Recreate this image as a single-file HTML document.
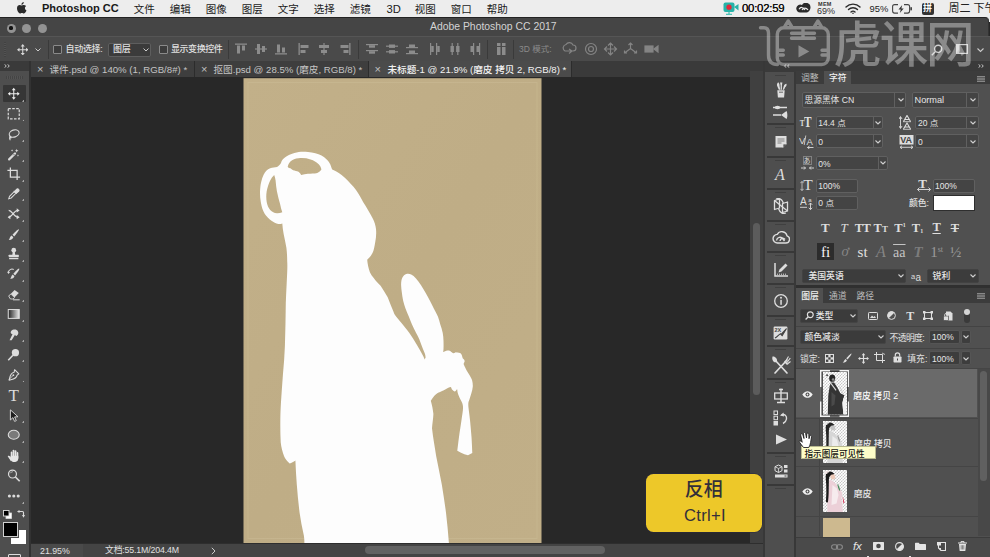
<!DOCTYPE html>
<html lang="zh"><head><meta charset="utf-8"><title>Photoshop CC</title>
<style>
*{box-sizing:border-box;margin:0;padding:0}
html,body{width:990px;height:557px;overflow:hidden;background:#282828}
body{position:relative;font-family:"Liberation Sans","Noto Sans CJK SC",sans-serif;font-size:10px;color:#d6d6d6;line-height:1}
.a{position:absolute}
.t{position:absolute;white-space:nowrap}
/* menu bar */
#menubar{left:0;top:0;width:990px;height:22px;background:#ededed;color:#1a1a1a;font-size:10.500px}
#menubar .t{top:4px}
/* title bar */
#titlebar{left:0;top:17px;width:988.500px;height:19px;background:#454545;border-top:1px solid #232323;border-right:1px solid #333;border-radius:0 4px 0 0}
.tl{position:absolute;top:5.500px;width:9px;height:9px;border-radius:50%;background:#939393}
/* options bar */
#optbar{left:0;top:36px;width:990px;height:25px;background:#4a4a4a;border-top:1px solid #555}
/* tab bar */
#tabbar{left:0;top:61px;width:764px;height:16px;background:#3a3a3a}
.tab{position:absolute;top:0;height:16px;font-size:9.650px;color:#c4c4c4;border-right:1px solid #2c2c2c}
.tab .t{top:4px}
/* left tools */
#tools{left:0;top:61px;width:31px;height:496px;background:#4e4e4e;border-right:2.500px solid #323232}
/* canvas */
#canvas{left:31px;top:77px;width:719px;height:466px;background:#282828}
#statusbar{left:31px;top:543px;width:733px;height:14px;background:#444}
#vscroll{left:750px;top:71px;width:13px;height:472px;background:#404040}
/* right */
#iconstrip{left:763px;top:61px;width:33px;height:496px;background:#4e4e4e;border-left:2px solid #383838;border-right:2px solid #383838}
#rpanel{left:796px;top:61px;width:194px;height:496px;background:#505050}
.inp{position:absolute;height:14px;background:#3a3a3a;border:1px solid #616161;border-radius:2px;color:#dcdcdc;font-size:9.5px}
.inp .t{top:2px;left:4px}
#rpanel .t{margin-top:1.200px}
</style></head>
<body>
<div id="menubar" class="a">
<svg class="a" style="left:16.800px;top:2px" width="9.800" height="11.800" viewBox="0 0 22 26"><path fill="#2a2a2a" d="M15.2 0c.2 1.6-.5 3.100-1.400 4.200-1 1.100-2.500 2-4 1.900-.2-1.500.6-3.100 1.500-4.100C12.300.9 13.900.1 15.200 0zM20.500 8.800c-1.700 1-2.700 2.700-2.700 4.700 0 2.300 1.400 4.300 3.500 5.100-.4 1.300-1 2.500-1.800 3.600-1.100 1.600-2.300 3.200-4.100 3.200s-2.300-1-4.300-1c-2 0-2.700 1.100-4.300 1.100-1.700 0-3-1.700-4.100-3.300C1.200 20 0 16.900 0 13.900 0 9.200 3.100 6.700 6.100 6.700c1.600 0 3 1.100 4 1.100s2.600-1.200 4.500-1.200c1.500 0 3.800.6 5.900 2.200z"/></svg>
<span class="t" style="left:42px;top:3px;font-weight:bold;font-size:11.050px">Photoshop CC</span>
<span class="t" style="left:133.8px">文件</span><span class="t" style="left:169.8px">编辑</span><span class="t" style="left:205.8px">图像</span><span class="t" style="left:241.8px">图层</span><span class="t" style="left:277.8px">文字</span><span class="t" style="left:313.8px">选择</span><span class="t" style="left:349.8px">滤镜</span><span class="t" style="left:386.500px;top:3.500px;font-size:11.200px">3D</span><span class="t" style="left:414.8px">视图</span><span class="t" style="left:450.8px">窗口</span><span class="t" style="left:486.8px">帮助</span>
<svg class="a" style="left:723px;top:2px" width="16" height="13" viewBox="0 0 16 13"><rect x="0.500" y="0.500" width="11" height="9.500" rx="2" fill="#27b3a8"/><path d="M11 5l4.500-3v6.500z" fill="#27b3a8"/><circle cx="6" cy="5.200" r="2.600" fill="#e5273a"/><path d="M6 10v2M3 12.300h6" stroke="#27b3a8" stroke-width="1"/></svg>
<span class="t" style="left:742px;top:3px;font-size:11.400px;color:#111;letter-spacing:-0.250px;text-shadow:0 0 0.400px #111">00:02:59</span>
<svg class="a" style="left:795px;top:3px" width="17" height="11" viewBox="0 0 17 11"><path d="M5.500 9.500a4 4 0 1 1 1.500-7.600 4.600 4.600 0 0 1 8.500 2.300c0 3-2 5.300-5 5.300z" fill="#2a2a2a"/><path d="M4 6.200c1.500-2.500 4-2.500 6 0.800M7 7c1.500-2.500 4.500-2.500 6 0" stroke="#ededed" stroke-width="1.100" fill="none"/></svg>
<span class="t" style="left:818px;top:1.500px;font-size:5.500px;font-weight:bold;color:#333;letter-spacing:0.300px">MEM</span>
<span class="t" style="left:817px;top:7px;font-size:9px;color:#333">69%</span>
<svg class="a" style="left:845px;top:3px" width="16" height="11" viewBox="0 0 16 11"><g fill="none" stroke="#2a2a2a" stroke-width="1.400" stroke-linecap="round"><path d="M1 4a10 10 0 0 1 14 0"/><path d="M3.500 6.500a6.500 6.500 0 0 1 9 0"/><path d="M6 9a3 3 0 0 1 4 0"/></g><circle cx="8" cy="10.200" r="0.800" fill="#2a2a2a"/></svg>
<span class="t" style="left:869.500px;top:4px;font-size:9.400px;color:#222">95%</span>
<svg class="a" style="left:892px;top:4px" width="21" height="10" viewBox="0 0 21 10"><rect x="0.600" y="0.600" width="17" height="8.500" rx="2" fill="none" stroke="#444" stroke-width="1.100"/><rect x="18.300" y="3" width="1.700" height="3.600" rx="0.800" fill="#444"/><rect x="6" y="0" width="6" height="10" fill="#ededed"/><path d="M10.200 1L6.500 5.400h2.300L7.800 9l3.900-4.500H9.400z" fill="#333"/></svg>
<span class="a" style="left:921.500px;top:2.500px;width:12px;height:12px;background:#333;border-radius:2px"></span><span class="t" style="left:923px;top:4px;font-size:9px;color:#fff;font-weight:bold">拼</span>
<span class="t" style="left:948.500px;top:3px;font-size:11px;color:#222">周二 下午</span>
</div>
<div id="titlebar" class="a">
<span class="tl" style="left:6.500px"></span><span class="a" style="left:9.400px;top:8.400px;width:3.200px;height:3.200px;border-radius:50%;background:#111"></span><span class="tl" style="left:22px"></span><span class="tl" style="left:37.500px"></span>
<span class="t" style="left:430px;top:4px;font-size:10.400px;color:#d4d4d4">Adobe Photoshop CC 2017</span>
</div>
<div id="optbar" class="a">
<span class="a" style="left:4px;top:5px;width:2px;height:15px;background:repeating-linear-gradient(#424242 0 1px,#525252 1px 2px)"></span>
<svg class="a" style="left:16.800px;top:6.800px" width="11.500" height="11.500" viewBox="0 0 13 13"><path d="M6.500 0L4.200 2.800h1.700v3.100H2.800V4.200L0 6.500l2.800 2.300V7.100h3.100v3.100H4.200L6.500 13l2.300-2.800H7.100V7.100h3.100v1.700L13 6.500l-2.800-2.300v1.700H7.100V2.800h1.700z" fill="#d8d8d8"/></svg>
<svg class="a" style="left:35px;top:11px" width="6" height="4" viewBox="0 0 6 4"><path d="M0.500 0.500L3 3l2.500-2.500" stroke="#ccc" stroke-width="1" fill="none"/></svg>
<span class="a" style="left:47.500px;top:3px;width:1px;height:19px;background:#3a3a3a"></span>
<span class="a" style="left:52.500px;top:8px;width:9px;height:9px;border:1px solid #8a8a8a;background:#3c3c3c;border-radius:1px"></span>
<span class="t" style="left:65.500px;top:7.500px;font-size:9px;color:#e0e0e0;font-weight:500;letter-spacing:-0.300px">自动选择:</span>
<span class="a" style="left:108px;top:5.500px;width:42.500px;height:14.500px;border:1px solid #5e5e5e;background:#3b3b3b;border-radius:2px"></span>
<span class="t" style="left:113px;top:7.500px;font-size:9px;color:#e0e0e0;font-weight:500;letter-spacing:-0.300px">图层</span>
<svg class="a" style="left:142.500px;top:10.500px" width="6" height="4" viewBox="0 0 6 4"><path d="M0.500 0.500L3 3l2.500-2.500" stroke="#ccc" stroke-width="1" fill="none"/></svg>
<span class="a" style="left:158.500px;top:8px;width:9px;height:9px;border:1px solid #8a8a8a;background:#3c3c3c;border-radius:1px"></span>
<span class="t" style="left:171px;top:7.500px;font-size:9px;color:#e0e0e0;font-weight:500;letter-spacing:-0.450px">显示变换控件</span>
<span class="a" style="left:228px;top:3px;width:1px;height:19px;background:#3a3a3a"></span>
<svg class="a" style="left:234.5px;top:6px" width="12" height="12" viewBox="0 0 12 12" fill="#8c8c8c"><rect x="0" y="0.500" width="12" height="1.300"/><rect x="2" y="2.500" width="3" height="8"/><rect x="7" y="2.500" width="3" height="5"/></svg><svg class="a" style="left:254.5px;top:6px" width="12" height="12" viewBox="0 0 12 12" fill="#8c8c8c"><rect x="0" y="5.400" width="12" height="1.200"/><rect x="2" y="1" width="3" height="10"/><rect x="7" y="3" width="3" height="6"/></svg><svg class="a" style="left:274.5px;top:6px" width="12" height="12" viewBox="0 0 12 12" fill="#8c8c8c"><rect x="0" y="10.200" width="12" height="1.300"/><rect x="2" y="1.500" width="3" height="8"/><rect x="7" y="4.500" width="3" height="5"/></svg><svg class="a" style="left:297.5px;top:6px" width="12" height="12" viewBox="0 0 12 12" fill="#8c8c8c"><rect x="0.500" y="0" width="1.300" height="12"/><rect x="2.500" y="2" width="8" height="3"/><rect x="2.500" y="7" width="5" height="3"/></svg><svg class="a" style="left:318px;top:6px" width="12" height="12" viewBox="0 0 12 12" fill="#8c8c8c"><rect x="5.400" y="0" width="1.200" height="12"/><rect x="1" y="2" width="10" height="3"/><rect x="3" y="7" width="6" height="3"/></svg><svg class="a" style="left:338.5px;top:6px" width="12" height="12" viewBox="0 0 12 12" fill="#8c8c8c"><rect x="10.200" y="0" width="1.300" height="12"/><rect x="1.500" y="2" width="8" height="3"/><rect x="4.500" y="7" width="5" height="3"/></svg><svg class="a" style="left:366px;top:6px" width="12" height="12" viewBox="0 0 12 12" fill="#8c8c8c"><rect x="0" y="1" width="12" height="1.200"/><rect x="3" y="2.200" width="6" height="2.500"/><rect x="0" y="7" width="12" height="1.200"/><rect x="3" y="8.200" width="6" height="2.500"/></svg><svg class="a" style="left:386px;top:6px" width="12" height="12" viewBox="0 0 12 12" fill="#8c8c8c"><rect x="0" y="2.600" width="12" height="1.200"/><rect x="3" y="1.500" width="6" height="3.400"/><rect x="0" y="8.200" width="12" height="1.200"/><rect x="3" y="7.100" width="6" height="3.400"/></svg><svg class="a" style="left:406px;top:6px" width="12" height="12" viewBox="0 0 12 12" fill="#8c8c8c"><rect x="0" y="4" width="12" height="1.200"/><rect x="3" y="1.500" width="6" height="2.500"/><rect x="0" y="10" width="12" height="1.200"/><rect x="3" y="7.500" width="6" height="2.500"/></svg><svg class="a" style="left:428.5px;top:6px" width="12" height="12" viewBox="0 0 12 12" fill="#8c8c8c"><rect x="1" y="0" width="1.200" height="12"/><rect x="2.200" y="3" width="2.500" height="6"/><rect x="7" y="0" width="1.200" height="12"/><rect x="8.200" y="3" width="2.500" height="6"/></svg><svg class="a" style="left:449px;top:6px" width="12" height="12" viewBox="0 0 12 12" fill="#8c8c8c"><rect x="2.600" y="0" width="1.200" height="12"/><rect x="1.500" y="3" width="3.400" height="6"/><rect x="8.200" y="0" width="1.200" height="12"/><rect x="7.100" y="3" width="3.400" height="6"/></svg><svg class="a" style="left:469px;top:6px" width="12" height="12" viewBox="0 0 12 12" fill="#8c8c8c"><rect x="4" y="0" width="1.200" height="12"/><rect x="1.500" y="3" width="2.500" height="6"/><rect x="10" y="0" width="1.200" height="12"/><rect x="7.500" y="3" width="2.500" height="6"/></svg>
<span class="a" style="left:357.500px;top:3px;width:1px;height:19px;background:#3a3a3a"></span>
<span class="a" style="left:487px;top:3px;width:1px;height:19px;background:#3a3a3a"></span>
<svg class="a" style="left:497px;top:6px" width="9" height="12" viewBox="0 0 9 12" fill="#8c8c8c"><rect x="0" y="0" width="3.500" height="3"/><rect x="5" y="0" width="3.500" height="3"/><rect x="0" y="4" width="3.500" height="8"/><rect x="5" y="4" width="3.500" height="8"/></svg>
<span class="a" style="left:512.500px;top:3px;width:1px;height:19px;background:#3a3a3a"></span>
<span class="t" style="left:519px;top:8px;font-size:8.500px;color:#8a8a8a">3D 模式:</span>
<svg class="a" style="left:562px;top:5px" width="98" height="14" viewBox="0 0 98 14" fill="none" stroke="#848484" stroke-width="1.200"><path d="M3 9a3.500 3.500 0 0 1 1-6.500 4 4 0 0 1 7 .500 3 3 0 0 1 0 6zM7 11.500l3-2.500-3-2"/><circle cx="29" cy="7" r="5.500"/><circle cx="29" cy="7" r="2.500"/><path d="M48.500 1v12M42.500 7h12M46 3.500l2.500-2.500 2.500 2.500M46 10.500l2.500 2.500 2.500-2.500M45 4.500l-2.500 2.500 2.500 2.500M52 4.500l2.500 2.500-2.500 2.500"/><path d="M68.500 1v5.500M62.500 11l6-4.500 6 4.500M66.500 3l2-2 2 2M62.500 8.500v2.500h2.500M74.500 8.500v2.500h-2.500"/><rect x="83" y="4" width="8" height="6" fill="#848484"/><path d="M92 7l4-3v6z" fill="#848484"/></svg>
<svg class="a" style="left:931px;top:6.500px" width="12" height="12" viewBox="0 0 12 12" fill="none" stroke="#d0d0d0" stroke-width="1.400"><circle cx="7.200" cy="4.800" r="3.600"/><path d="M4.500 7.500L0.800 11.200"/></svg>
<svg class="a" style="left:956px;top:7px" width="12" height="10" viewBox="0 0 12 10"><rect x="0.600" y="0.600" width="10.800" height="8.800" fill="none" stroke="#d0d0d0" stroke-width="1.200"/><rect x="0.600" y="0.600" width="3" height="8.800" fill="#d0d0d0"/></svg>
<svg class="a" style="left:977px;top:10.500px" width="7" height="5" viewBox="0 0 7 5"><path d="M0.500 0.500L3.500 3.500l3-3" stroke="#ccc" stroke-width="1.100" fill="none"/></svg>
</div>
<div id="tabbar" class="a">
<div class="tab" style="left:31px;width:164px;background:#3e3e3e"><span class="t" style="left:6px;top:3px;font-size:11px;color:#c0c0c0">×</span><span class="t" style="left:18.500px">课件.psd @ 140% (1, RGB/8#) *</span></div>
<div class="tab" style="left:195px;width:174px;background:#3e3e3e"><span class="t" style="left:6px;top:3px;font-size:11px;color:#c0c0c0">×</span><span class="t" style="left:18.500px">抠图.psd @ 28.5% (磨皮, RGB/8) *</span></div>
<div class="tab" style="left:369px;width:203px;background:#4b4b4b;color:#f2f2f2"><span class="t" style="left:5.500px;top:3px;font-size:11px;color:#c0c0c0">×</span><span class="t" style="left:18.500px;font-weight:500">未标题-1 @ 21.9% (磨皮 拷贝 2, RGB/8) *</span></div>
</div>
<div id="tools" class="a">
<span class="a" style="left:0;top:0;width:29px;height:10px;background:#3a3a3a"></span>
<svg class="a" style="left:3.5px;top:3.3px" width="6" height="4" viewBox="0 0 6 4"><path d="M0.500 0.300L2.300 2 0.500 3.700M3.500 0.300L5.300 2 3.500 3.700" fill="none" stroke="#d4d4d4" stroke-width="0.900"/></svg>
<span class="a" style="left:6px;top:14.500px;width:17px;height:3px;background:repeating-linear-gradient(90deg,#404040 0 1px,#565656 1px 2px);opacity:.7"></span>
<span class="a" style="left:3px;top:23.500px;width:23px;height:17.500px;background:#363636;border-radius:1px"></span>
<svg class="a" style="left:7.250px;top:26.45px" width="13.500" height="13.500" viewBox="0 0 16 16"><path d="M8 1L5.700 3.800h1.700v3.600H3.800V5.700L1 8l2.800 2.300V8.600h3.600v3.600H5.700L8 15l2.300-2.800H8.600V8.600h3.600v1.700L15 8l-2.800-2.300v1.700H8.600V3.800h1.700z" fill="#f0f0f0"/></svg><svg class="a" style="left:21.700px;top:38.10px" width="2.700" height="2.700" viewBox="0 0 3 3"><path d="M3 0v3H0z" fill="#c8c8c8"/></svg>
<svg class="a" style="left:7.250px;top:46.05px" width="13.500" height="13.500" viewBox="0 0 16 16"><rect x="1.500" y="2" width="13" height="12" fill="none" stroke="#dcdcdc" stroke-width="1.400" stroke-dasharray="3 1.700"/></svg><svg class="a" style="left:21.700px;top:57.70px" width="2.700" height="2.700" viewBox="0 0 3 3"><path d="M3 0v3H0z" fill="#c8c8c8"/></svg>
<svg class="a" style="left:7.250px;top:66.75px" width="13.500" height="13.500" viewBox="0 0 16 16"><g fill="none" stroke="#dcdcdc" stroke-width="1.300"><ellipse cx="8.500" cy="6.500" rx="6" ry="4.200" transform="rotate(-18 8.500 6.500)"/><path d="M4 9.500c-1.500 1-.5 2.500.5 2.200 1-.4.200-1.700-.8-1.200-1.200.8-.5 3 .3 4"/></g></svg><svg class="a" style="left:21.700px;top:78.40px" width="2.700" height="2.700" viewBox="0 0 3 3"><path d="M3 0v3H0z" fill="#c8c8c8"/></svg>
<svg class="a" style="left:7.250px;top:86.75px" width="13.500" height="13.500" viewBox="0 0 16 16"><path d="M2.500 13.500L9.500 6.500" stroke="#dcdcdc" stroke-width="2.600" stroke-linecap="round"/><path d="M7.400 8.600l1.500-1.500" stroke="#4c4c4c" stroke-width="1"/><g fill="#dcdcdc"><path d="M11.500 1l.6 1.600 1.600.6-1.600.6-.6 1.600-.6-1.600-1.600-.6 1.600-.6z"/><path d="M6 1.500l.4 1 1 .4-1 .4-.4 1-.4-1-1-.4 1-.4z"/><path d="M13 7.500l.4 1 1 .4-1 .4-.4 1-.4-1-1-.4 1-.4z"/></g></svg><svg class="a" style="left:21.700px;top:98.40px" width="2.700" height="2.700" viewBox="0 0 3 3"><path d="M3 0v3H0z" fill="#c8c8c8"/></svg>
<svg class="a" style="left:7.250px;top:106.25px" width="13.500" height="13.500" viewBox="0 0 16 16"><g fill="none" stroke="#dcdcdc" stroke-width="1.500"><path d="M4 0.500v11.500h11.500"/><path d="M0.500 4h11.500v11.500"/></g></svg><svg class="a" style="left:21.700px;top:117.90px" width="2.700" height="2.700" viewBox="0 0 3 3"><path d="M3 0v3H0z" fill="#c8c8c8"/></svg>
<svg class="a" style="left:7.250px;top:125.75px" width="13.500" height="13.500" viewBox="0 0 16 16"><path d="M2 14l1-3 5.500-5.500 2 2L5 13z" fill="none" stroke="#dcdcdc" stroke-width="1.200"/><path d="M8 4.500l3.500 3.500M9 5.500l2.500-3a1.800 1.800 0 0 1 2.500 2.500l-3 2.500z" fill="#dcdcdc" stroke="#dcdcdc" stroke-width="1.200"/></svg><svg class="a" style="left:21.700px;top:137.40px" width="2.700" height="2.700" viewBox="0 0 3 3"><path d="M3 0v3H0z" fill="#c8c8c8"/></svg>
<svg class="a" style="left:7.250px;top:146.25px" width="13.500" height="13.500" viewBox="0 0 16 16"><g fill="none" stroke="#dcdcdc" stroke-width="1.500"><path d="M2 4c4 0 6 8 11 8M2 12c4 0 6-8 11-8"/></g><path d="M11.500 1.500L15 4l-3.500 2.500zM11.500 9.500L15 12l-3.500 2.500zM4 9.500L0.800 12 4 14.500z" fill="#dcdcdc"/></svg><svg class="a" style="left:21.700px;top:157.90px" width="2.700" height="2.700" viewBox="0 0 3 3"><path d="M3 0v3H0z" fill="#c8c8c8"/></svg>
<svg class="a" style="left:7.250px;top:166.55px" width="13.500" height="13.500" viewBox="0 0 16 16"><path d="M14 1.500c.8.800-3.500 6.500-5.500 8.500l-2-2C8.500 6 13.200.7 14 1.500z" fill="#dcdcdc"/><path d="M5.500 9l2 2c-.5 2-2.500 3.500-5.500 3 1.500-1 1-3.500 3.500-5z" fill="#dcdcdc"/></svg><svg class="a" style="left:21.700px;top:178.20px" width="2.700" height="2.700" viewBox="0 0 3 3"><path d="M3 0v3H0z" fill="#c8c8c8"/></svg>
<svg class="a" style="left:7.250px;top:186.25px" width="13.500" height="13.500" viewBox="0 0 16 16"><circle cx="8" cy="3.800" r="2.800" fill="#dcdcdc"/><path d="M6.800 5.500h2.400l.5 4h-3.400z" fill="#dcdcdc"/><rect x="2" y="9.300" width="12" height="2.800" rx="0.500" fill="#dcdcdc"/><rect x="2.500" y="13" width="11" height="1.500" fill="#dcdcdc"/></svg><svg class="a" style="left:21.700px;top:197.90px" width="2.700" height="2.700" viewBox="0 0 3 3"><path d="M3 0v3H0z" fill="#c8c8c8"/></svg>
<svg class="a" style="left:7.250px;top:206.25px" width="13.500" height="13.500" viewBox="0 0 16 16"><path d="M14.500 2c.8.800-3 6-5 8l-2-2c2-2 6.200-6.800 7-6z" fill="#dcdcdc"/><path d="M6.800 9l2 2c-.5 2-2.300 3.300-5 2.800 1.300-1 1-3.300 3-4.800z" fill="#dcdcdc"/><path d="M1.500 6.500a4.500 4.500 0 0 1 6.500-3.500" fill="none" stroke="#dcdcdc" stroke-width="1.200"/><path d="M0 5.500l1.700 2.700 2-2.400z" fill="#dcdcdc"/></svg><svg class="a" style="left:21.700px;top:217.90px" width="2.700" height="2.700" viewBox="0 0 3 3"><path d="M3 0v3H0z" fill="#c8c8c8"/></svg>
<svg class="a" style="left:7.250px;top:226.75px" width="13.500" height="13.500" viewBox="0 0 16 16"><path d="M2 9.500l7-7 5 3.500-7 7H4z" fill="#dcdcdc"/><path d="M4.500 7l4.500 4.500" stroke="#4c4c4c" stroke-width="1"/><path d="M2 9.500L4.500 7l4.500 4.500L7 13H4z" fill="#4c4c4c" stroke="#dcdcdc" stroke-width="1"/><path d="M7 14h8" stroke="#dcdcdc" stroke-width="1.200"/></svg><svg class="a" style="left:21.700px;top:238.40px" width="2.700" height="2.700" viewBox="0 0 3 3"><path d="M3 0v3H0z" fill="#c8c8c8"/></svg>
<svg class="a" style="left:7.250px;top:246.25px" width="13.500" height="13.500" viewBox="0 0 16 16"><defs><linearGradient id="gt" x1="0" x2="1"><stop offset="0" stop-color="#222"/><stop offset="1" stop-color="#e8e8e8"/></linearGradient></defs><rect x="1.500" y="3" width="13" height="10.500" fill="url(#gt)" stroke="#dcdcdc" stroke-width="1.200"/></svg><svg class="a" style="left:21.700px;top:257.90px" width="2.700" height="2.700" viewBox="0 0 3 3"><path d="M3 0v3H0z" fill="#c8c8c8"/></svg>
<svg class="a" style="left:7.250px;top:266.75px" width="13.500" height="13.500" viewBox="0 0 16 16"><path d="M5 3.500c2-2 6.500-2.500 8 .5 1.200 2.500-.5 5-2.500 5.500l-1-1.500-4 6.500H3l3.500-7c-2-.5-2.800-2.500-1.500-4z" fill="#dcdcdc"/></svg><svg class="a" style="left:21.700px;top:278.40px" width="2.700" height="2.700" viewBox="0 0 3 3"><path d="M3 0v3H0z" fill="#c8c8c8"/></svg>
<svg class="a" style="left:7.250px;top:286.75px" width="13.500" height="13.500" viewBox="0 0 16 16"><circle cx="10" cy="5.500" r="4.300" fill="#dcdcdc"/><path d="M7 8.500l-5.500 6" stroke="#dcdcdc" stroke-width="1.800"/></svg><svg class="a" style="left:21.700px;top:298.40px" width="2.700" height="2.700" viewBox="0 0 3 3"><path d="M3 0v3H0z" fill="#c8c8c8"/></svg>
<svg class="a" style="left:7.250px;top:306.95px" width="13.500" height="13.500" viewBox="0 0 16 16"><path d="M9 2l5 5-2 1.500c-.5 3-2.500 4.500-7.500 5.500l-2 .5.500-2C4 7.500 5.500 5.500 8.500 5z" fill="none" stroke="#dcdcdc" stroke-width="1.300" stroke-linejoin="round"/><path d="M2.500 13.500l4.500-4.500" stroke="#dcdcdc" stroke-width="1"/><circle cx="7.500" cy="8.500" r="1.100" fill="#dcdcdc"/></svg><svg class="a" style="left:21.700px;top:318.60px" width="2.700" height="2.700" viewBox="0 0 3 3"><path d="M3 0v3H0z" fill="#c8c8c8"/></svg>
<span class="t" style="left:7px;top:325.0px;font-family:'Liberation Serif',serif;font-size:17px;margin-left:1.500px;margin-top:1px;color:#dcdcdc">T</span><svg class="a" style="left:7.250px;top:327.75px" width="13.500" height="13.500" viewBox="0 0 16 16"></svg><svg class="a" style="left:21.700px;top:339.40px" width="2.700" height="2.700" viewBox="0 0 3 3"><path d="M3 0v3H0z" fill="#c8c8c8"/></svg>
<svg class="a" style="left:7.250px;top:347.55px" width="13.500" height="13.500" viewBox="0 0 16 16"><path d="M4 1v12l3-2.800 2 4.500 2-.9-2-4.400 4-.2z" fill="#1e1e1e" stroke="#dcdcdc" stroke-width="1.100" stroke-linejoin="round"/></svg><svg class="a" style="left:21.700px;top:359.20px" width="2.700" height="2.700" viewBox="0 0 3 3"><path d="M3 0v3H0z" fill="#c8c8c8"/></svg>
<svg class="a" style="left:7.250px;top:367.45px" width="13.500" height="13.500" viewBox="0 0 16 16"><ellipse cx="8" cy="8" rx="6.500" ry="5.300" fill="#7a7a7a" stroke="#dcdcdc" stroke-width="1.300"/></svg><svg class="a" style="left:21.700px;top:379.10px" width="2.700" height="2.700" viewBox="0 0 3 3"><path d="M3 0v3H0z" fill="#c8c8c8"/></svg>
<svg class="a" style="left:7.250px;top:387.55px" width="13.500" height="13.500" viewBox="0 0 16 16"><g fill="#e6e6e6"><rect x="4.400" y="3" width="2.100" height="8" rx="1.050"/><rect x="6.700" y="0.800" width="2.100" height="9" rx="1.050"/><rect x="9" y="1.500" width="2.100" height="9" rx="1.050"/><rect x="11.300" y="3.600" width="2.100" height="8" rx="1.050"/><path d="M4.400 8h9v3c0 2.600-1.500 4.300-3.600 4.300H7.600c-1.500 0-2.600-1-3.200-2.200z"/><path d="M0.800 8.700c.8-.9 2.100-.7 2.900.1l2.200 2.400-1.200 3.200z"/></g></svg><svg class="a" style="left:21.700px;top:399.20px" width="2.700" height="2.700" viewBox="0 0 3 3"><path d="M3 0v3H0z" fill="#c8c8c8"/></svg>
<svg class="a" style="left:7.250px;top:407.75px" width="13.500" height="13.500" viewBox="0 0 16 16"><circle cx="6.500" cy="6" r="4.700" fill="none" stroke="#dcdcdc" stroke-width="1.400"/><path d="M10 9.500l5 5" stroke="#dcdcdc" stroke-width="2"/><path d="M4 5a3 3 0 0 1 3-1.800" stroke="#dcdcdc" stroke-width="0.800" fill="none"/></svg>
<svg class="a" style="left:7px;top:432.5px" width="14" height="4" viewBox="0 0 14 4" fill="#dcdcdc"><circle cx="2.400" cy="2" r="1.550"/><circle cx="6.800" cy="2" r="1.550"/><circle cx="11.200" cy="2" r="1.550"/></svg><svg class="a" style="left:21.700px;top:439.90px" width="2.700" height="2.700" viewBox="0 0 3 3"><path d="M3 0v3H0z" fill="#c8c8c8"/></svg>
<svg class="a" style="left:2.500px;top:448.5px" width="9" height="9" viewBox="0 0 9 9"><rect x="3" y="3" width="5.500" height="5.500" fill="#fff" stroke="#ddd" stroke-width="0.800"/><rect x="0.500" y="0.500" width="5.500" height="5.500" fill="#000" stroke="#ddd" stroke-width="0.900"/></svg>
<svg class="a" style="left:16.500px;top:448.5px" width="8" height="8" viewBox="0 0 8 8"><path d="M2 1.500h3.500a1 1 0 0 1 1 1v3.500" fill="none" stroke="#dcdcdc" stroke-width="1.100"/><path d="M2.500 0L0 1.500 2.500 3zM5 5l1.500 2.800L8 5z" fill="#dcdcdc"/></svg>
<span class="a" style="left:11px;top:469px;width:14.500px;height:14px;background:#fff"></span><span class="a" style="left:3px;top:461px;width:14.500px;height:14.500px;background:#000;border:1px solid #d0d0d0;box-shadow:0 0 0 1px #4c4c4c"></span>
<span class="a" style="left:7.500px;top:493px;width:13px;height:6px;border:1px solid #dcdcdc;border-radius:1px"></span>
</div>
<div id="canvas" class="a">
<svg class="a" style="left:212px;top:1px" width="299" height="465" viewBox="243 78 299 465">
<defs><linearGradient id="pg" x1="0" y1="0" x2="1" y2="1"><stop offset="0" stop-color="#c2b089"/><stop offset="0.5" stop-color="#bfad86"/><stop offset="1" stop-color="#c1af88"/></linearGradient></defs>
<rect x="243.5" y="78.2" width="298" height="464.800" fill="url(#pg)"/><rect x="248" y="82.500" width="289" height="456" fill="none" stroke="#d2c29e" stroke-opacity="0.350" stroke-width="1"/>
<path fill="#fdfdfd" fill-rule="evenodd" d="
M281,163 C282,159 286,155.5 294.4,153 C299,151.6 303,151.6 308,152 C313,152.5 318,153.5 321.5,155.6 C325.5,158 328,160.5 329.5,163 C331,165.5 331.5,168 332.2,169.6
C335,171 338.5,172.5 341.6,175 C346,178.5 350,183 353.7,187.1 C357,191 360.5,197 363.1,202 C366.5,207.5 370,213 372.5,218.1 C374.5,222 375.6,225.5 376,229
C376.5,234 376,238 375.2,242.3 C374.5,246.5 374,250 372.5,253.1 C371,256 369,258 367.2,259.8
C367.5,264 368.5,268 369.8,272 C371.5,276 376,281 380.6,285.8 C383,289.5 385.5,293.5 387.7,297.3 C389.5,302 391.5,307 393.5,311.7 C393.8,312.2 393.7,313.0 395.0,314.9 C396.3,316.8 399.4,320.3 401.5,323.0 C403.6,325.7 405.8,328.1 407.9,331.1 C410.0,334.1 412.5,337.8 414.4,340.8 C416.3,343.8 417.8,346.3 419.3,348.9 C420.8,351.5 422.4,354.4 423.3,356.2 C424.2,358.0 424.4,358.9 424.6,359.5
L425.6,357.5 C425.5,356.9 425.5,355.8 424.9,353.8 C424.2,351.8 422.6,348.1 421.7,345.7 C420.8,343.3 420.2,341.4 419.3,339.2 C418.4,337.0 417.2,335.1 416.0,332.7 C414.8,330.3 413.2,327.3 412.0,324.6 C410.8,321.9 409.9,319.2 408.8,316.5 C407.7,313.8 406.4,311.2 405.5,308.5 C404.6,305.8 403.7,303.1 403.1,300.4 C402.5,297.7 402.1,295.0 401.8,292.3 C401.5,289.6 401.0,286.6 401.1,284.2 C401.2,281.8 401.4,279.4 402.3,277.7 C403.2,276.0 404.8,274.6 406.3,274.1 C407.8,273.6 409.6,273.8 411.2,274.5 C412.8,275.2 414.4,276.8 416.0,278.5 C417.6,280.2 419.3,282.6 420.9,285.0 C422.5,287.4 424.2,290.5 425.7,293.1 C427.2,295.7 428.4,297.8 429.8,300.4 C431.2,303.0 432.5,305.8 433.8,308.5 C435.1,311.2 436.8,313.8 437.9,316.5 C439.0,319.2 439.5,321.9 440.3,324.6 C441.1,327.3 442.2,330.0 442.7,332.7 C443.2,335.4 443.4,338.1 443.5,340.8 C443.6,343.5 443.6,347.0 443.5,348.9 C443.4,350.8 443.2,351.6 443.2,352.1
C443.5,352.0 444.4,351.6 445.1,351.3 C445.8,351.1 446.6,350.6 447.5,350.6 C448.4,350.6 449.4,350.7 450.2,351.1 C451.0,351.5 451.7,352.5 452.3,352.8 C452.9,353.1 453.3,353.3 453.9,353.2 C454.5,353.1 455.2,352.3 455.8,352.2 C456.4,352.1 457.0,352.5 457.7,352.6 C458.4,352.7 459.4,352.7 460.0,353.0 C460.6,353.3 461.1,353.8 461.5,354.4 C461.9,355.0 462.0,355.9 462.2,356.5 C462.4,357.1 462.4,357.6 462.7,358.2 C463.0,358.8 463.9,359.3 464.2,359.8 C464.5,360.3 464.7,360.8 464.6,361.4 C464.5,362.0 463.9,362.7 463.8,363.3 C463.7,363.9 463.6,364.0 464.0,365.1 C464.4,366.2 465.6,368.5 466.5,370.2 C467.4,371.9 468.7,373.5 469.6,375.2 C470.5,376.9 471.6,378.3 472.1,380.2 C472.6,382.1 472.9,384.4 472.8,386.5 C472.7,388.6 472.0,390.7 471.5,392.8 C471.0,394.9 470.1,397.3 469.6,399.0 C469.1,400.7 468.6,401.2 468.4,402.8 C468.2,404.4 468.3,405.6 468.6,408.5 C468.9,411.4 469.5,415.2 470.0,420.0 C470.5,424.8 471.1,431.5 471.5,437.0 C471.9,442.5 472.2,450.3 472.3,453.0 L468,455.3 L464.4,454.2 L461,452.8 L457.3,450.7 C457.6,448.4 458.3,442.1 459.0,437.0 C459.7,431.9 460.8,424.8 461.5,420.0 C462.2,415.2 462.9,411.4 463.0,408.5 C463.1,405.6 462.7,404.6 462.1,402.8 C461.5,401.0 460.3,399.5 459.6,397.8 C458.9,396.1 458.1,394.2 457.7,392.8 C457.3,391.4 457.4,389.6 457.1,389.3 C456.8,389.0 456.2,390.4 455.8,390.8 C455.4,391.2 455.1,391.7 454.5,391.5 C453.9,391.3 452.7,390.3 452.0,389.6 C451.3,388.9 451.6,387.0 450.2,387.1 C448.8,387.2 446.2,389.2 443.9,390.3 C441.6,391.4 438.5,392.3 436.3,394.0 C434.1,395.7 431.7,399.6 430.8,400.7
C432,405 433,409.5 433.4,414 C433.2,419 432.3,423.5 432,428.2 C433,437.5 434.8,447 436.2,456.3 C438,465.5 440,475 441.8,484.5 C443.3,494 444.8,503.5 446,512.7 C447.2,523 448.2,533 448.9,543
L304.4,543 C304.4,540 304.2,537.5 303.8,535.2 C302,527.5 300.6,520 299.6,512.7 C298.4,503.5 297.5,494 296.8,484.5 C296.2,476.5 295.7,468.5 295.4,460.6 C293.5,462 291.5,463 289.7,463.4 C287,461.5 285.3,459 284.1,456.3 C282.5,452 281.2,447.5 280.7,442.3 C280,428 280.3,414 280.9,403.6 C281.5,394 282.2,384.5 282.9,375 C283.8,365.5 284.5,355.5 284.9,346 C285.4,331.5 285.6,317.5 285.8,303 C286.2,292 286.8,282 287.2,272 C287.4,268 287.4,264.5 287.2,261.2 C287.2,256.5 286.9,252 286.4,247.7 C285.5,243 284.6,238.5 283.7,234.3 C283,230.5 282.5,227 282.3,223.5
C281,224 279.7,224.2 278.3,224 C276,223.5 273.5,222.3 271.5,220.8 C268.8,218.8 266.5,216.5 264.8,214 C262.8,210.5 261.5,206.5 260.8,202 C260,197.5 259.8,193 260.2,188.5 C260.6,183.5 261.7,179 263.5,175 C265,171.8 267.3,169.5 270.2,168.3 C272.5,167.4 275,167.5 277,167 C278.6,166 280,164.6 281,163 Z
M287.7,166.9 C288,164.8 289,163 290.4,161.5 C292.5,159.6 295.4,158.6 298.5,158.3 C302.5,157.8 306.7,158.2 310.6,159.4 C313.7,160.4 316.6,162 318.7,164.2 C320.2,165.8 321.2,167.6 321.4,169.6 C320.5,171.2 319,172.3 317.3,172.9 C314.3,173.6 311,173.5 307.9,173.7 C305.6,174 303.4,174.6 301.2,175 C300.6,173.7 299.7,172.6 298.5,171.8 C296.8,170.9 294.9,170.7 293.1,170.2 C292.1,169.7 291.2,169.1 290.4,168.3 C289.4,168.1 288.5,167.6 287.7,166.9 Z
M274.2,175 C272.5,176.5 271.2,178.3 270.2,180.4 C268.6,183.8 267.4,187.4 266.7,191.2 C266.1,194.8 266.1,198.4 266.7,201.9 C267.3,205 268.4,207.8 270.2,210 C272,211.9 274.3,213 276.9,213.3 C278.8,213.4 280.6,213 282.3,212.2 C281.4,209.8 280.7,207.2 280.2,204.6 C279,200.2 277.8,195.8 276.9,191.2 C276.3,187.6 275.9,184 275.6,180.4 C275.3,178.5 274.8,176.7 274.2,175 Z
"/>
</svg>
</div>
<div id="vscroll" class="a"><span class="a" style="left:3px;top:152px;width:6.500px;height:171.500px;border-radius:3.500px;background:#5c5c5c"></span></div>
<div id="statusbar" class="a">
<span class="a" style="left:0;top:0;width:733px;height:1px;background:#2e2e2e"></span>
<span class="a" style="left:0;top:1px;width:52px;height:13px;background:#4a4a4a"></span>
<span class="t" style="left:9px;top:3.500px;font-size:8.800px;color:#e0e0e0">21.95%</span>
<span class="t" style="left:74px;top:3px;font-size:8.800px;color:#e0e0e0;letter-spacing:-0.150px">文档:55.1M/204.4M</span>
<svg class="a" style="left:180px;top:4px" width="5" height="8" viewBox="0 0 5 8"><path d="M0.800 0.800L4 4 0.800 7.200" fill="none" stroke="#ccc" stroke-width="1"/></svg>
<span class="a" style="left:334px;top:3px;width:240px;height:7.500px;border-radius:4px;background:#626262"></span>
</div>
<div id="iconstrip" class="a">
<span class="a" style="left:0;top:0;width:34px;height:10.500px;background:#3a3a3a"></span><svg class="a" style="left:19px;top:3px" width="6" height="4" viewBox="0 0 6 4"><path d="M2.300 0.300L0.500 2 2.300 3.700M5.300 0.300L3.500 2 5.300 3.700" fill="none" stroke="#d4d4d4" stroke-width="0.900"/></svg>
<span class="a" style="left:10px;top:14px;width:11px;height:1px;background:#404040"></span>
<svg class="a" style="left:7.5px;top:20.5px" width="16" height="16" viewBox="0 0 16 16"><path d="M4.300 8.300h7.400l-.6 7.200H4.900z" fill="#dedede"/><path d="M5.800 7.800L4.200 4c-.6-1.300 0-3 1-3.700 1 .9 1.600 2.400 1.300 3.700L7.300 7.800zM7.600 7.800V3.600L7.100.6h2.300L8.900 3.600v4.200zM9.700 7.800l1-3.600c.4-1.300 1.500-2.400 2.800-2.500.3 1.300-.2 2.700-1.200 3.400L11 7.800z" fill="#dedede"/><path d="M6 10.200h4" stroke="#4b4b4b" stroke-width="0.800"/></svg>
<svg class="a" style="left:6.5px;top:42.599999999999994px" width="18" height="16" viewBox="0 0 18 16"><path d="M1 3.500h3M7.500 3.500H15" stroke="#dedede" stroke-width="1.500"/><ellipse cx="5.500" cy="3.500" rx="2.800" ry="1.800" fill="#dedede"/><path d="M1 11h8" stroke="#dedede" stroke-width="1.500"/><path d="M9 11l5.500-4c1 1.200 1.200 6.500 0 8z" fill="#dedede"/></svg>
<span class="a" style="left:1.500px;top:62px;width:28px;height:2px;background:#383838"></span><span class="a" style="left:10px;top:66px;width:11px;height:1px;background:#404040"></span>
<svg class="a" style="left:8.5px;top:74.0px" width="14" height="14" viewBox="0 0 14 14"><path d="M1.500 1h11v8l-3.500 3.500h-7.500z" fill="#dedede"/><path d="M9 12.500V9h3.500" fill="#4c4c4c" stroke="#dedede" stroke-width="0.800"/><path d="M3.500 4h7M3.500 6h7M3.500 8h4" stroke="#6a6a6a" stroke-width="0.800"/></svg>
<span class="a" style="left:1.500px;top:94.5px;width:28px;height:2px;background:#383838"></span><span class="a" style="left:10px;top:98.5px;width:11px;height:1px;background:#404040"></span>
<span class="t" style="left:9px;top:104px;font-family:'Liberation Serif',serif;font-style:italic;font-size:16px;color:#dedede;margin-left:1px;margin-top:1.500px">A</span>
<span class="a" style="left:1.500px;top:126.5px;width:28px;height:2px;background:#383838"></span><span class="a" style="left:10px;top:130.5px;width:11px;height:1px;background:#404040"></span>
<svg class="a" style="left:7.5px;top:137.4px" width="16" height="16" viewBox="0 0 16 16"><g fill="none" stroke="#dedede" stroke-width="1.300" stroke-linejoin="round"><path d="M1.500 2.500l5-1.500v9l-5 1.500z"/><path d="M9.500 5.500l5-1.500v9l-5 1.500z"/><path d="M3 1c3-1 6 0 7.500 4.500M13 15c-3 1-6 0-7.500-4.500M1.500 2.500l13 10.500"/></g></svg>
<span class="a" style="left:1.500px;top:158.5px;width:28px;height:2px;background:#383838"></span><span class="a" style="left:10px;top:162.5px;width:11px;height:1px;background:#404040"></span>
<svg class="a" style="left:6.5px;top:169.5px" width="18" height="14" viewBox="0 0 18 14"><g fill="none" stroke="#dedede" stroke-width="1.400"><path d="M5.500 12a4.300 4.300 0 0 1-.3-8.600 5.300 5.300 0 0 1 9.800 1.400 3.700 3.700 0 0 1-1 7.200z"/><path d="M4.500 9.500c.5-3.500 4.500-4.500 6.500-1.500l1.500 2"/><path d="M8 10c.5-3 3.500-3.500 5-1.500"/></g></svg>
<span class="a" style="left:1.500px;top:190px;width:28px;height:2px;background:#383838"></span><span class="a" style="left:10px;top:194px;width:11px;height:1px;background:#404040"></span>
<svg class="a" style="left:7.5px;top:201.0px" width="16" height="16" viewBox="0 0 16 16"><path d="M2 1v13h13" fill="none" stroke="#dedede" stroke-width="1.500"/><path d="M4 12.200h9.500" stroke="#dedede" stroke-width="1" stroke-dasharray="1 1"/><path d="M5.500 10.500l1-3 6-6 2 2-6 6z" fill="#dedede"/></svg>
<span class="a" style="left:1.500px;top:221.5px;width:28px;height:2px;background:#383838"></span><span class="a" style="left:10px;top:225.5px;width:11px;height:1px;background:#404040"></span>
<svg class="a" style="left:7.5px;top:232.2px" width="16" height="16" viewBox="0 0 16 16"><circle cx="8" cy="8" r="6.300" fill="none" stroke="#dedede" stroke-width="1.300"/><rect x="7.300" y="6.800" width="1.500" height="5" fill="#dedede"/><circle cx="8" cy="4.700" r="1" fill="#dedede"/></svg>
<span class="a" style="left:1.500px;top:253.5px;width:28px;height:2px;background:#383838"></span><span class="a" style="left:10px;top:257.5px;width:11px;height:1px;background:#404040"></span>
<svg class="a" style="left:8.0px;top:265.0px" width="15" height="14" viewBox="0 0 15 14"><rect x="0.600" y="0.600" width="13.800" height="12.800" rx="1.200" fill="#dedede"/><text x="1.500" y="6" font-family="Liberation Sans,sans-serif" font-size="5.500" font-weight="bold" fill="#444">2X</text><path d="M2 12c3-1.500 4-4 6-4.500M13.500 2.500L8 8.500l1.200 1.200z" stroke="#444" stroke-width="1.100" fill="#444"/></svg>
<span class="a" style="left:1.500px;top:284.3px;width:28px;height:2px;background:#383838"></span><span class="a" style="left:10px;top:288.3px;width:11px;height:1px;background:#404040"></span>
<svg class="a" style="left:5.5px;top:293.8px" width="20" height="20" viewBox="0 0 20 20"><g stroke="#dedede" stroke-width="1.700" stroke-linecap="round"><path d="M4 5l12 13M16 5L4 18"/></g><path d="M1.500 1.500c2.500-.5 5 2 4.500 5L4 7.500C1.500 6.500.8 4 1.500 1.500z" fill="#dedede"/><path d="M14.500 6.500l3-5M16 7.500l3.300-4.500M17 8.500l2.500-2" stroke="#dedede" stroke-width="1.100"/><path d="M14 5.500l3.500 3.500-1.500 1-3-3z" fill="#dedede"/></svg>
<span class="a" style="left:1.500px;top:316.5px;width:28px;height:2px;background:#383838"></span><span class="a" style="left:10px;top:320.5px;width:11px;height:1px;background:#404040"></span>
<svg class="a" style="left:7.5px;top:327.2px" width="16" height="16" viewBox="0 0 16 16"><rect x="1.700" y="5" width="12.600" height="6" fill="none" stroke="#dedede" stroke-width="1.300"/><path d="M8 0.500v14.500M6 1.500h4M4 14.500h8" stroke="#dedede" stroke-width="1.400"/></svg>
<svg class="a" style="left:7.5px;top:348.7px" width="16" height="16" viewBox="0 0 16 16"><rect x="1" y="1" width="3.500" height="3.500" fill="none" stroke="#dedede" stroke-width="1"/><rect x="1" y="6.200" width="3.500" height="3.500" fill="none" stroke="#dedede" stroke-width="1"/><rect x="0.500" y="11" width="4.500" height="4.500" fill="#dedede"/><path d="M8.500 5c3-1.500 5.500 1 5 4-.3 2-1.500 3.500-3.500 4.500" fill="none" stroke="#dedede" stroke-width="1.400"/><path d="M7 5.500l3.500-3 .5 4z" fill="#dedede"/></svg>
<svg class="a" style="left:10.0px;top:372.7px" width="13" height="11" viewBox="0 0 13 11"><path d="M1 0.500l11 5-11 5z" fill="#dedede"/></svg>
<span class="a" style="left:1.500px;top:391.3px;width:28px;height:2px;background:#383838"></span><span class="a" style="left:10px;top:395.3px;width:11px;height:1px;background:#404040"></span>
<svg class="a" style="left:8.5px;top:402.8px" width="14" height="14" viewBox="0 0 14 14"><path d="M4.500 1L8 2.700v4L4.500 8.500 1 6.700v-4z" fill="none" stroke="#dedede" stroke-width="1"/><path d="M1 2.700l3.500 1.800L8 2.700M4.500 4.500v4" stroke="#dedede" stroke-width="0.800" fill="none"/><rect x="10" y="1" width="3.500" height="3" fill="#dedede"/><rect x="10" y="5.500" width="3.500" height="3" fill="#dedede"/><rect x="1" y="10.500" width="12.500" height="3" fill="#dedede"/><rect x="10.500" y="11.500" width="2" height="1" fill="#4c4c4c"/></svg>
<span class="a" style="left:1.500px;top:423.3px;width:28px;height:2px;background:#383838"></span><span class="a" style="left:10px;top:427.3px;width:11px;height:1px;background:#404040"></span>
</div>
<div id="rpanel" class="a">
<span class="a" style="left:0px;top:0px;width:194px;height:10px;background:#3a3a3a"></span>
<svg class="a" style="left:181.5px;top:3px" width="6" height="4" viewBox="0 0 6 4"><path d="M0.500 0.300L2.300 2 0.500 3.700M3.500 0.300L5.300 2 3.500 3.700" fill="none" stroke="#d4d4d4" stroke-width="0.900"/></svg>
<span class="a" style="left:0px;top:10px;width:194px;height:13px;background:#3c3c3c"></span>
<span class="a" style="left:28px;top:10px;width:27px;height:13px;background:#505050"></span>
<span class="t" style="left:5px;top:12px;font-size:8.8px;color:#bdbdbd;">调整</span>
<span class="t" style="left:33px;top:12px;font-size:8.8px;color:#f0f0f0;font-weight:500">字符</span>
<svg class="a" style="left:180.5px;top:14.5px" width="8" height="6" viewBox="0 0 8 6"><path d="M0 0.600h8M0 2.200h8M0 3.800h8M0 5.400h8" stroke="#9a9a9a" stroke-width="0.900"/></svg>
<span class="a" style="left:6px;top:31px;width:103.5px;height:15.5px;background:#444;border:1px solid #606060;border-radius:2px"></span><span class="a" style="left:97.500px;top:32px;width:1px;height:13.5px;background:#606060"></span><svg class="a" style="left:101.5px;top:37.05px" width="6" height="4" viewBox="0 0 6 4"><path d="M0.500 0.500L3 3l2.500-2.500" stroke="#d0d0d0" stroke-width="1.100" fill="none"/></svg><span class="t" style="left:8.5px;top:33.95px;font-size:8.700px;color:#e6e6e6;">思源黑体 CN</span>
<span class="a" style="left:116px;top:31px;width:66.70000000000005px;height:15.5px;background:#444;border:1px solid #606060;border-radius:2px"></span><span class="a" style="left:170.300px;top:32px;width:1px;height:13.5px;background:#606060"></span><svg class="a" style="left:173.500px;top:37.05px" width="6" height="4" viewBox="0 0 6 4"><path d="M0.500 0.500L3 3l2.500-2.500" stroke="#d0d0d0" stroke-width="1.100" fill="none"/></svg><span class="t" style="left:118.5px;top:33.95px;font-size:9.2px;color:#e6e6e6;">Normal</span>
<span class="t" style="left:3.800px;top:59px;font-size:7.200px;color:#dedede;font-family:'Liberation Serif',serif;font-weight:bold">T</span><span class="t" style="left:8.300px;top:53.100px;font-size:14.200px;color:#dedede;font-family:'Liberation Serif',serif;font-weight:bold;transform:scaleX(0.800);transform-origin:0 0;">T</span>
<span class="a" style="left:19.700000000000045px;top:54.7px;width:67.79999999999995px;height:13.799999999999997px;background:#444;border:1px solid #606060;border-radius:2px"></span><span class="a" style="left:77px;top:55.7px;width:1px;height:11.799999999999997px;background:#606060"></span><svg class="a" style="left:79.20000000000005px;top:59.89999999999999px" width="6" height="4" viewBox="0 0 6 4"><path d="M0.500 0.500L3 3l2.500-2.500" stroke="#d0d0d0" stroke-width="1.100" fill="none"/></svg><span class="t" style="left:22.299999999999955px;top:57.00px;font-size:8.500px;color:#e6e6e6;">14.4 点</span>
<svg class="a" style="left:103px;top:54px" width="13" height="15" viewBox="0 0 13 15"><path d="M1.500 2v11M0 4l1.500-2.500L3 4M0 11l1.500 2.500L3 11" fill="none" stroke="#dedede" stroke-width="0.900"/><path d="M4.500 6.500L8 0.500l3.500 6M5.800 4.500h4.400M4.500 14L8 8l3.500 6M5.800 12h4.400" fill="none" stroke="#dedede" stroke-width="1.100"/><path d="M4 6.700h8M4 14.300h8" stroke="#dedede" stroke-width="0.800"/></svg>
<span class="a" style="left:119.10000000000002px;top:54.7px;width:63.60000000000002px;height:13.799999999999997px;background:#444;border:1px solid #606060;border-radius:2px"></span><span class="a" style="left:170.300px;top:55.7px;width:1px;height:11.799999999999997px;background:#606060"></span><svg class="a" style="left:173.500px;top:59.89999999999999px" width="6" height="4" viewBox="0 0 6 4"><path d="M0.500 0.500L3 3l2.500-2.500" stroke="#d0d0d0" stroke-width="1.100" fill="none"/></svg><span class="t" style="left:122px;top:57.00px;font-size:8.500px;color:#e6e6e6;">20 点</span>
<svg class="a" style="left:3px;top:73.5px" width="15" height="14" viewBox="0 0 15 14"><text x="0" y="9" font-family="Liberation Sans,sans-serif" font-size="9.500" fill="#dedede">V</text><text x="7.600" y="10" font-family="Liberation Sans,sans-serif" font-size="9.500" fill="#dedede">A</text><path d="M6.800 0.500L5.200 10" stroke="#dedede" stroke-width="0.800"/><path d="M8.500 12.500h6M10.500 11l-2 1.500 2 1.500" fill="none" stroke="#dedede" stroke-width="0.900"/></svg>
<span class="a" style="left:19.700000000000045px;top:73.19999999999999px;width:67.79999999999995px;height:14.100000000000023px;background:#444;border:1px solid #606060;border-radius:2px"></span><span class="a" style="left:77px;top:74.19999999999999px;width:1px;height:12.100000000000023px;background:#606060"></span><svg class="a" style="left:79.20000000000005px;top:78.55000000000001px" width="6" height="4" viewBox="0 0 6 4"><path d="M0.500 0.500L3 3l2.500-2.500" stroke="#d0d0d0" stroke-width="1.100" fill="none"/></svg><span class="t" style="left:22.299999999999955px;top:75.65px;font-size:8.500px;color:#e6e6e6;">0</span>
<svg class="a" style="left:103px;top:73.5px" width="15" height="14" viewBox="0 0 15 14"><rect x="0.500" y="0" width="14" height="9.500" fill="#dedede"/><text x="1.200" y="8.200" font-family="Liberation Sans,sans-serif" font-size="9" font-weight="bold" fill="#444">VA</text><path d="M1 12.300h13M3 10.800l-2 1.500 2 1.500M12 10.800l2 1.500-2 1.500" fill="none" stroke="#dedede" stroke-width="0.900"/></svg>
<span class="a" style="left:119.10000000000002px;top:73.19999999999999px;width:63.60000000000002px;height:14.100000000000023px;background:#444;border:1px solid #606060;border-radius:2px"></span><span class="a" style="left:170.300px;top:74.19999999999999px;width:1px;height:12.100000000000023px;background:#606060"></span><svg class="a" style="left:173.500px;top:78.55000000000001px" width="6" height="4" viewBox="0 0 6 4"><path d="M0.500 0.500L3 3l2.500-2.500" stroke="#d0d0d0" stroke-width="1.100" fill="none"/></svg><span class="t" style="left:122px;top:75.65px;font-size:8.500px;color:#e6e6e6;">0</span>
<svg class="a" style="left:5px;top:95px" width="13" height="15" viewBox="0 0 13 15"><rect x="2.500" y="0.500" width="8" height="8" fill="none" stroke="#dedede" stroke-width="0.700" stroke-dasharray="1 1"/><text x="2.600" y="7.400" font-family="Noto Sans CJK SC,sans-serif" font-size="7" fill="#dedede">あ</text><path d="M0 12h4.500M3 10.500l1.500 1.500-1.500 1.500M13 12H8.500M10 10.500L8.500 12l1.500 1.500" fill="none" stroke="#dedede" stroke-width="0.900"/></svg>
<span class="a" style="left:19.700000000000045px;top:95px;width:72.09999999999991px;height:14px;background:#444;border:1px solid #606060;border-radius:2px"></span><span class="a" style="left:81.60000000000002px;top:96px;width:1px;height:12px;background:#606060"></span><svg class="a" style="left:83.79999999999995px;top:100.30000000000001px" width="6" height="4" viewBox="0 0 6 4"><path d="M0.500 0.500L3 3l2.500-2.500" stroke="#d0d0d0" stroke-width="1.100" fill="none"/></svg><span class="t" style="left:22.299999999999955px;top:97.40px;font-size:8.500px;color:#e6e6e6;">0%</span>
<svg class="a" style="left:3.800px;top:118.500px" width="4" height="12" viewBox="0 0 5 13"><path d="M2.500 1v11M0.500 3l2-2.300 2 2.300M0.500 10l2 2.300 2-2.300" fill="none" stroke="#dedede" stroke-width="0.900"/></svg><span class="t" style="left:7.300px;top:115px;font-size:15.500px;color:#dedede;font-family:'Liberation Serif',serif;">T</span>
<span class="a" style="left:20px;top:117.5px;width:42.39999999999998px;height:14.0px;background:#444;border:1px solid #606060;border-radius:2px"></span><span class="t" style="left:22.299999999999955px;top:119.90px;font-size:8.500px;color:#e6e6e6;">100%</span>
<span class="t" style="left:122.20000000000005px;top:115px;font-size:13px;color:#dedede;font-family:'Liberation Serif',serif;font-weight:bold">T</span><svg class="a" style="left:120.5px;top:126.200px" width="14" height="5" viewBox="0 0 14 5"><path d="M0.500 2.500h13M2.500 0.500l-2 2 2 2M11.500 0.500l2 2-2 2" fill="none" stroke="#dedede" stroke-width="0.900"/></svg>
<span class="a" style="left:136.60000000000002px;top:117.5px;width:42.39999999999998px;height:14.0px;background:#444;border:1px solid #606060;border-radius:2px"></span><span class="t" style="left:139px;top:119.90px;font-size:8.500px;color:#e6e6e6;">100%</span>
<svg class="a" style="left:3.5px;top:134.5px" width="14" height="14" viewBox="0 0 14 14"><text x="0" y="9" font-family="Liberation Sans,sans-serif" font-size="10" fill="#dedede">A</text><text x="8.300" y="6" font-family="Liberation Sans,sans-serif" font-size="6" fill="#dedede">a</text><path d="M0 11.300h7" stroke="#dedede" stroke-width="0.900"/><path d="M10.500 7v6.500M8.800 8.800l1.700-1.800 1.700 1.800M8.800 11.800l1.700 1.800 1.700-1.800" fill="none" stroke="#dedede" stroke-width="0.900"/></svg>
<span class="a" style="left:20px;top:134.5px;width:42.39999999999998px;height:14.300000000000011px;background:#444;border:1px solid #606060;border-radius:2px"></span><span class="t" style="left:22.299999999999955px;top:137.05px;font-size:8.500px;color:#e6e6e6;">0 点</span>
<span class="t" style="left:113px;top:137px;font-size:8.8px;color:#e0e0e0;font-weight:500">颜色:</span>
<span class="a" style="left:137px;top:134.3px;width:42px;height:15.700px;background:#fff;border:1px solid #2e2e2e"></span>
<span class="t" style="left:17.299999999999955px;top:159.2px;width:24px;text-align:center;font-size:13px;color:#dedede;font-family:'Liberation Serif',serif;font-weight:bold">T</span>
<span class="t" style="left:36px;top:159.2px;width:24px;text-align:center;font-size:13px;color:#dedede;font-family:'Liberation Serif',serif;font-style:italic">T</span>
<span class="t" style="left:54.60000000000002px;top:159.5px;width:24px;text-align:center;font-size:12.5px;color:#dedede;font-family:'Liberation Serif',serif;letter-spacing:-0.500px;font-weight:bold">TT</span>
<span class="t" style="left:72.79999999999995px;top:159.5px;width:24px;text-align:center;font-size:12.5px;color:#dedede;font-family:'Liberation Serif',serif;font-weight:bold">T<span style="font-size:9px">T</span></span>
<span class="t" style="left:92px;top:159.5px;width:24px;text-align:center;font-size:12.5px;color:#dedede;font-family:'Liberation Serif',serif;font-weight:bold">T<span style="font-size:6px;vertical-align:5px">1</span></span>
<span class="t" style="left:109.5px;top:159.5px;width:24px;text-align:center;font-size:12.5px;color:#dedede;font-family:'Liberation Serif',serif;font-weight:bold">T<span style="font-size:6px;vertical-align:-1px">1</span></span>
<span class="t" style="left:128.60000000000002px;top:158.7px;width:24px;text-align:center;font-size:12.5px;color:#dedede;font-family:'Liberation Serif',serif;text-decoration:underline;text-underline-offset:2px;font-weight:bold">T</span>
<span class="t" style="left:146.79999999999995px;top:159.5px;width:24px;text-align:center;font-size:12.5px;color:#dedede;font-family:'Liberation Serif',serif;text-decoration:line-through;font-weight:bold">T</span>
<span class="a" style="left:21.200000000000045px;top:182.1px;width:17.0px;height:16.900000000000006px;background:#2c2c2c"></span>
<span class="t" style="left:17.700000000000045px;top:182.5px;width:24px;text-align:center;font-size:15px;color:#f4f4f4;font-family:'Liberation Serif',serif;">fi</span>
<span class="t" style="left:37.200000000000045px;top:183px;width:24px;text-align:center;font-size:14px;color:#858585;font-family:'Liberation Serif',serif;font-style:italic">ơ</span>
<span class="t" style="left:54.60000000000002px;top:182.5px;width:24px;text-align:center;font-size:15px;color:#e0e0e0;font-family:'Liberation Serif',serif;">st</span>
<span class="t" style="left:72.79999999999995px;top:182px;width:24px;text-align:center;font-size:16px;color:#858585;font-family:'Liberation Serif',serif;font-style:italic">A</span>
<span class="t" style="left:91.29999999999995px;top:183.5px;width:24px;text-align:center;font-size:14px;color:#c4c4c4;font-family:'Liberation Serif',serif;text-decoration:overline">aa</span>
<span class="t" style="left:110.20000000000005px;top:182.5px;width:24px;text-align:center;font-size:15px;color:#7c7c7c;font-family:'Liberation Serif',serif;font-style:italic;font-weight:bold">T</span>
<span class="t" style="left:128.60000000000002px;top:182.5px;width:24px;text-align:center;font-size:15px;color:#9a9a9a;font-family:'Liberation Serif',serif;">1<span style="font-size:8px;vertical-align:5px">st</span></span>
<span class="t" style="left:147.5px;top:182.5px;width:24px;text-align:center;font-size:15px;color:#9a9a9a;font-family:'Liberation Serif',serif;">½</span>
<span class="a" style="left:6px;top:207.8px;width:104px;height:14.0px;background:#3c3c3c;border:1px solid #424242;border-radius:2px"></span><svg class="a" style="left:102px;top:213.10000000000002px" width="6" height="4" viewBox="0 0 6 4"><path d="M0.500 0.500L3 3l2.500-2.500" stroke="#d0d0d0" stroke-width="1.100" fill="none"/></svg><span class="t" style="left:12.5px;top:210.20px;font-size:8.8px;color:#e6e6e6;font-weight:500">美国英语</span>
<span class="t" style="left:115px;top:210.5px;font-size:7.5px;color:#dedede;">a</span><span class="t" style="left:119.5px;top:211px;font-size:10px;color:#dedede;">a</span>
<span class="a" style="left:130.5px;top:207.8px;width:52.200000000000045px;height:14.0px;background:#3c3c3c;border:1px solid #424242;border-radius:2px"></span><svg class="a" style="left:173.70000000000005px;top:213.10000000000002px" width="6" height="4" viewBox="0 0 6 4"><path d="M0.500 0.500L3 3l2.500-2.500" stroke="#d0d0d0" stroke-width="1.100" fill="none"/></svg><span class="t" style="left:136.60000000000002px;top:210.20px;font-size:8.8px;color:#e6e6e6;font-weight:500">锐利</span>
<span class="a" style="left:0px;top:224px;width:194px;height:3px;background:#303030"></span>
<span class="a" style="left:0px;top:227px;width:194px;height:15px;background:#3c3c3c;"></span>
<span class="a" style="left:0px;top:227px;width:27px;height:15px;background:#505050;"></span>
<span class="t" style="left:5.2999999999999545px;top:229.500px;font-size:8.8px;color:#f0f0f0;font-weight:500">图层</span>
<span class="t" style="left:33px;top:229.500px;font-size:8.8px;color:#bdbdbd;">通道</span>
<span class="t" style="left:60.5px;top:229.500px;font-size:8.8px;color:#bdbdbd;">路径</span>
<svg class="a" style="left:180.5px;top:232.2px" width="8" height="6" viewBox="0 0 8 6"><path d="M0 0.600h8M0 2.200h8M0 3.800h8M0 5.400h8" stroke="#9a9a9a" stroke-width="0.900"/></svg>
<span class="a" style="left:4px;top:247.60000000000002px;width:57.60000000000002px;height:14.0px;background:#3b3b3b;border:1px solid #444;border-radius:2px"></span><svg class="a" style="left:53.5px;top:252.90000000000003px" width="6" height="4" viewBox="0 0 6 4"><path d="M0.500 0.500L3 3l2.500-2.500" stroke="#d0d0d0" stroke-width="1.100" fill="none"/></svg><span class="t" style="left:19.700000000000045px;top:250.00px;font-size:8.8px;color:#e6e6e6;font-weight:500">类型</span>
<svg class="a" style="left:9.299999999999955px;top:250.3px" width="9" height="9" viewBox="0 0 9 9"><circle cx="5.300" cy="3.700" r="2.900" fill="none" stroke="#dedede" stroke-width="1.200"/><path d="M3.300 5.800L0.600 8.500" stroke="#dedede" stroke-width="1.300"/></svg>
<svg class="a" style="left:72.0px;top:250.5px" width="10" height="8" viewBox="0 0 10 8"><rect x="0.500" y="0.500" width="9" height="7" rx="0.800" fill="none" stroke="#dedede" stroke-width="1"/><path d="M2 6l2-2.500 1.500 1.500 1.200-1L8 6z" fill="#dedede"/></svg>
<svg class="a" style="left:91.0px;top:250.0px" width="9" height="9" viewBox="0 0 9 9"><circle cx="4.500" cy="4.500" r="3.900" fill="none" stroke="#dedede" stroke-width="1"/><path d="M1.700 7.300A3.900 3.900 0 0 1 7.300 1.700z" fill="#dedede"/></svg>
<span class="t" style="left:110.29999999999995px;top:248.3px;font-size:12px;color:#dedede;font-family:'Liberation Serif',serif;font-weight:bold">T</span>
<svg class="a" style="left:127.39999999999998px;top:250.0px" width="10" height="9" viewBox="0 0 10 9"><rect x="1.500" y="1.500" width="7" height="6" fill="none" stroke="#dedede" stroke-width="1"/><rect x="0" y="0" width="2.500" height="2.500" fill="#dedede"/><rect x="7.500" y="0" width="2.500" height="2.500" fill="#dedede"/><rect x="0" y="6.500" width="2.500" height="2.500" fill="#dedede"/><rect x="7.500" y="6.500" width="2.500" height="2.500" fill="#dedede"/></svg>
<svg class="a" style="left:147.20000000000005px;top:249.5px" width="10" height="10" viewBox="0 0 10 10"><path d="M3 0.500h4.500l2 2v7h-6.500z" fill="#dedede"/><rect x="0.500" y="5" width="5" height="4.500" fill="#dedede" stroke="#4c4c4c" stroke-width="0.700"/><path d="M1.700 5V3.800a1.300 1.300 0 0 1 2.600 0V5" fill="none" stroke="#dedede" stroke-width="0.900"/></svg>
<span class="a" style="left:168px;top:250px;width:6px;height:12px;background:#3a3a3a;border-radius:3px"></span>
<span class="a" style="left:168px;top:247.7px;width:6.2000000000000455px;height:6.300000000000011px;background:#d4d4d4;border-radius:50%"></span>
<span class="a" style="left:0px;top:265px;width:194px;height:1px;background:#434343;"></span>
<span class="a" style="left:4px;top:268.9px;width:85.60000000000002px;height:14.0px;background:#3b3b3b;border:1px solid #444;border-radius:2px"></span><svg class="a" style="left:81.70000000000005px;top:274.2px" width="6" height="4" viewBox="0 0 6 4"><path d="M0.500 0.500L3 3l2.500-2.500" stroke="#d0d0d0" stroke-width="1.100" fill="none"/></svg><span class="t" style="left:8.5px;top:271.30px;font-size:8.8px;color:#e6e6e6;font-weight:500">颜色减淡</span>
<span class="t" style="left:93.5px;top:271.5px;font-size:8.8px;color:#e0e0e0;letter-spacing:-0.600px">不透明度:</span>
<span class="a" style="left:133px;top:268.9px;width:30.5px;height:14.0px;background:#3d3d3d;border:1px solid #555;border-radius:2px"></span><span class="t" style="left:136px;top:271.30px;font-size:8.500px;color:#e6e6e6;">100%</span>
<span class="a" style="left:164.5px;top:268.9px;width:10.0px;height:14.0px;background:#3d3d3d;border:1px solid #555;border-radius:2px"></span><svg class="a" style="left:166.5px;top:274.2px" width="6" height="4" viewBox="0 0 6 4"><path d="M0.500 0.500L3 3l2.500-2.500" stroke="#d0d0d0" stroke-width="1.100" fill="none"/></svg>
<span class="a" style="left:0px;top:286.5px;width:194px;height:1.0px;background:#434343;"></span>
<span class="t" style="left:4px;top:292.5px;font-size:8.8px;color:#e0e0e0;">锁定:</span>
<svg class="a" style="left:29.0px;top:292.5px" width="9" height="9" viewBox="0 0 9 9"><rect x="0" y="0" width="9" height="9" fill="#dedede"/><rect x="1" y="1" width="2.300" height="2.300" fill="#444"/><rect x="5.600" y="1" width="2.300" height="2.300" fill="#444"/><rect x="3.300" y="3.300" width="2.300" height="2.300" fill="#444"/><rect x="1" y="5.600" width="2.300" height="2.300" fill="#444"/><rect x="5.600" y="5.600" width="2.300" height="2.300" fill="#444"/></svg>
<svg class="a" style="left:46.200000000000045px;top:291.5px" width="10" height="11" viewBox="0 0 10 11"><path d="M9.500 0.500c.5.500-2.500 4.500-4 6l-1.300-1.300C5.700 3.700 9 0 9.500.500z" fill="#dedede"/><path d="M3.600 6l1.300 1.300c-.3 1.500-1.800 2.500-4.200 2.500C2 9 1.800 7 3.600 6z" fill="#dedede"/></svg>
<svg class="a" style="left:61.5px;top:291.5px" width="11" height="11" viewBox="0 0 11 11"><path d="M5.500 0L3.700 2.200h1.200v2.700H2.200V3.700L0 5.500l2.200 1.800V6.100h2.700v2.700H3.700L5.500 11l1.800-2.200H6.100V6.100h2.700v1.200L11 5.500 8.800 3.700v1.200H6.100V2.200h1.200z" fill="#dedede"/></svg>
<svg class="a" style="left:78.20000000000005px;top:291.0px" width="12" height="11" viewBox="0 0 12 11"><path d="M2.500 0v8.500H11M0 2.500h8.500V11" fill="none" stroke="#dedede" stroke-width="1"/><path d="M8 1l3 1.500" stroke="#dedede" stroke-width="0.800"/></svg>
<svg class="a" style="left:96.70000000000005px;top:291.3px" width="9" height="11" viewBox="0 0 9 11"><rect x="0.500" y="4.500" width="8" height="6" rx="0.700" fill="#dedede"/><path d="M2.300 4.500V3a2.200 2.200 0 0 1 4.400 0v1.500" fill="none" stroke="#dedede" stroke-width="1.200"/><rect x="4" y="6.500" width="1" height="2" fill="#444"/></svg>
<span class="t" style="left:111.29999999999995px;top:292.5px;font-size:8.8px;color:#e0e0e0;">填充:</span>
<span class="a" style="left:133px;top:290.3px;width:30.5px;height:14.0px;background:#3d3d3d;border:1px solid #555;border-radius:2px"></span><span class="t" style="left:136px;top:292.70px;font-size:8.500px;color:#e6e6e6;">100%</span>
<span class="a" style="left:164.5px;top:290.3px;width:10.0px;height:14.0px;background:#3d3d3d;border:1px solid #555;border-radius:2px"></span><svg class="a" style="left:166.5px;top:295.6px" width="6" height="4" viewBox="0 0 6 4"><path d="M0.500 0.500L3 3l2.500-2.500" stroke="#d0d0d0" stroke-width="1.100" fill="none"/></svg>
<span class="a" style="left:0px;top:307.3px;width:194px;height:1px;background:#454545;"></span>
<span class="a" style="left:0px;top:308.3px;width:23.600000000000023px;height:48.19999999999999px;background:#5c5c5c;"></span>
<span class="a" style="left:23.600000000000023px;top:308.3px;width:157.89999999999998px;height:48.19999999999999px;background:#6a6a6a;"></span>
<svg class="a" style="left:6.2999999999999545px;top:329.5px" width="11" height="7" viewBox="0 0 11 7"><path d="M0.300 3.500C2 0.800 4 0.200 5.500 0.200S9 0.800 10.700 3.500C9 6.200 7 6.800 5.500 6.800S2 6.200 0.300 3.500z" fill="#f0f0f0"/><circle cx="5.500" cy="3.500" r="2" fill="#4a4a4a"/><circle cx="5.500" cy="3.500" r="0.900" fill="#f0f0f0"/></svg>
<span class="a" style="left:26.799999999999955px;top:311.2px;width:24.400px;height:42.400px;background-color:#fff;background-image:linear-gradient(45deg,#c8c8c8 25%,transparent 25%,transparent 75%,#c8c8c8 75%),linear-gradient(45deg,#c8c8c8 25%,transparent 25%,transparent 75%,#c8c8c8 75%);background-size:3px 3px;background-position:0 0,1.500px 1.500px;"></span><svg class="a" style="left:23.8px;top:308.9px" width="29.200" height="47" viewBox="0 0 29.200 47"><g transform="translate(2.500 1.900)"><path d="M7.300 13.600L5.800 23.300 5.300 42.700H20.900L19.900 31 21.800 23.300 17.900 21.300 14.500 15 11.600 10.700 8.500 10.500z" fill="#343434"/><path d="M20.900 26.200l2.900 1-.5 15.500h-2.400l-1-11.700z" fill="#f2f2f2"/><ellipse cx="9.700" cy="6.300" rx="3" ry="3.600" fill="#262626"/><circle cx="10.600" cy="7.600" r="1.300" fill="#8c8c8c"/><circle cx="4.600" cy="3.400" r="1" fill="#444"/><path d="M7.800 10.700L13.600 18.400" stroke="#d8d8d8" stroke-width="1.100"/><path d="M17 14.500L21.300 22.800" stroke="#d0d0d0" stroke-width="1"/><path d="M9 20l4 3.500-1 9-3 2z" fill="#4a4a4a"/></g><rect x="2" y="1.400" width="25.700" height="43.700" fill="none" stroke="#2c2c2c" stroke-width="0.800"/><path d="M10 0.700H0.700V17M19.500 0.700H28.500V17M0.700 31.500V46.300H10M28.500 31.500V46.300H19.500" stroke="#f4f4f4" stroke-width="1.400" fill="none"/></svg>
<span class="t" style="left:57.299999999999955px;top:329.5px;font-size:8.8px;color:#fafafa;font-weight:500">磨皮 拷贝 2</span>
<span class="a" style="left:0px;top:356.5px;width:181.5px;height:1px;background:#454545;"></span>
<span class="a" style="left:23.299999999999955px;top:357.5px;width:1.0px;height:117.5px;background:#444;"></span>
<span class="a" style="left:26.799999999999955px;top:359.5px;width:24.40000000000009px;height:42.5px;background:#eee;background-color:#fff;background-image:linear-gradient(45deg,#c8c8c8 25%,transparent 25%,transparent 75%,#c8c8c8 75%),linear-gradient(45deg,#c8c8c8 25%,transparent 25%,transparent 75%,#c8c8c8 75%);background-size:3px 3px;background-position:0 0,1.500px 1.500px;"></span>
<svg class="a" style="left:26.799999999999955px;top:359.5px" width="24.400" height="42.500" viewBox="0 0 24.400 42.500"><path d="M6.500 9.500c2.500 1 5 2.500 7 5l3.500 5c1.500 1.500 2.500 3.500 2.200 5.500l-.8 3.500c.8 4 1.200 8 1.400 14H4.500c-.3-7-.2-13 .4-19z" fill="#d6d6d6"/><path d="M9.500 15l4.500 3.500 1.500 6.500-2 8.500-5 1.500z" fill="#ececec"/><path d="M3 3.500c1.500-2.200 5-2.600 7-.8l-.8 2.300c-2.300.2-3.200 2-3.300 4.500L5.700 20c0 5-.3 9-.8 12.500l-2-.5c.5-6 .6-12 .3-18-.3-3.500-.8-7.500-.2-10.500z" fill="#262626"/><ellipse cx="9.800" cy="6.600" rx="2.400" ry="2.800" fill="#c4c4c4" transform="rotate(-20 9.800 6.600)"/><path d="M6.300 4.200c1.500-1.500 3.500-1.800 5-.8l-1 1.200c-1.500-.3-2.800.3-3.500 1.500z" fill="#262626"/><circle cx="3.200" cy="2.600" r="1.500" fill="#e8e8e8"/><circle cx="5.300" cy="1.500" r="1" fill="#e8e8e8"/><path d="M14.500 13.500c1.300 2 2.300 4.300 2.800 6.800l-1 .5c-1-2.500-1.900-4.800-1.800-7.300z" fill="#9a9a9a"/><path d="M19.500 26l2 6.500-1 1z" fill="#aaa"/></svg>
<span class="t" style="left:58px;top:378px;font-size:8.8px;color:#e6e6e6;font-weight:500">磨皮 拷贝</span>
<span class="a" style="left:0px;top:405px;width:181.5px;height:1px;background:#454545;"></span>
<svg class="a" style="left:6.2999999999999545px;top:426.5px" width="11" height="7" viewBox="0 0 11 7"><path d="M0.300 3.500C2 0.800 4 0.200 5.500 0.200S9 0.800 10.700 3.500C9 6.200 7 6.800 5.500 6.800S2 6.200 0.300 3.500z" fill="#f0f0f0"/><circle cx="5.500" cy="3.500" r="2" fill="#4a4a4a"/><circle cx="5.500" cy="3.500" r="0.900" fill="#f0f0f0"/></svg>
<span class="a" style="left:26.799999999999955px;top:408.5px;width:24.40000000000009px;height:42.10000000000002px;background:#eee;background-color:#fff;background-image:linear-gradient(45deg,#c8c8c8 25%,transparent 25%,transparent 75%,#c8c8c8 75%),linear-gradient(45deg,#c8c8c8 25%,transparent 25%,transparent 75%,#c8c8c8 75%);background-size:3px 3px;background-position:0 0,1.500px 1.500px;"></span>
<svg class="a" style="left:26.799999999999955px;top:408.5px" width="24.400" height="42.100" viewBox="0 0 24.400 42.100"><path d="M6.500 9.500c2.500 1 5 2.500 7 5l3.500 5c1.500 1.500 2.500 3.500 2.200 5.500l-.8 3.500c.8 4 1.200 8 1.400 14H4.500c-.3-7-.2-13 .4-19z" fill="#ecd0d8"/><path d="M9.500 15l4.500 3.500 1.500 6.500-2 8.500-5 1.500z" fill="#f6ebee"/><path d="M3 3.500c1.500-2.200 5-2.600 7-.8l-.8 2.300c-2.300.2-3.200 2-3.300 4.500L5.700 20c0 5-.3 9-.8 12.500l-2-.5c.5-6 .6-12 .3-18-.3-3.500-.8-7.500-.2-10.500z" fill="#1a1a1a"/><ellipse cx="9.800" cy="6.600" rx="2.400" ry="2.800" fill="#ecc9b8" transform="rotate(-20 9.800 6.600)"/><path d="M6.300 4.200c1.500-1.500 3.500-1.800 5-.8l-1 1.200c-1.500-.3-2.800.3-3.500 1.500z" fill="#1a1a1a"/><circle cx="3.200" cy="2.600" r="1.500" fill="#f0e6e6"/><circle cx="5.300" cy="1.500" r="1" fill="#f0e6e6"/><path d="M14.500 13.500c1.300 2 2.300 4.300 2.800 6.800l-1 .5c-1-2.500-1.900-4.800-1.800-7.300z" fill="#4a8a5e"/><path d="M19.500 26l2 6.500-1 1z" fill="#d6244c"/></svg>
<span class="t" style="left:57.700000000000045px;top:427.5px;font-size:8.8px;color:#e6e6e6;font-weight:500">磨皮</span>
<span class="a" style="left:0px;top:454.5px;width:181.5px;height:1px;background:#454545;"></span>
<span class="a" style="left:26.799999999999955px;top:457px;width:27.40000000000009px;height:18.5px;background:#cdb98f;"></span>
<span class="a" style="left:181.5px;top:308.3px;width:12.5px;height:167.2px;background:#484848;"></span>
<span class="a" style="left:184.29999999999995px;top:310px;width:6.7000000000000455px;height:109.69999999999999px;background:#606060;border-radius:3.500px"></span>
<span class="a" style="left:0px;top:475.5px;width:194px;height:20.5px;background:#4a4a4a;border-top:1px solid #3c3c3c"></span>
<svg class="a" style="left:34.799999999999955px;top:482.5px" width="12" height="6" viewBox="0 0 12 6"><rect x="0.600" y="0.800" width="6" height="4.400" rx="2.200" fill="none" stroke="#8a8a8a" stroke-width="1.100"/><rect x="5.400" y="0.800" width="6" height="4.400" rx="2.200" fill="none" stroke="#8a8a8a" stroke-width="1.100"/></svg>
<span class="t" style="left:57px;top:479px;font-size:11.5px;color:#e4e4e4;font-style:italic;letter-spacing:-0.300px">fx</span>
<svg class="a" style="left:77.20000000000005px;top:481.29999999999995px" width="11" height="8" viewBox="0 0 11 8"><rect x="0" y="0" width="11" height="8" rx="0.500" fill="#e4e4e4"/><circle cx="5.500" cy="4" r="2.300" fill="#4a4a4a"/></svg>
<svg class="a" style="left:99.29999999999995px;top:480.79999999999995px" width="9" height="9" viewBox="0 0 9 9"><circle cx="4.500" cy="4.500" r="3.900" fill="none" stroke="#e4e4e4" stroke-width="1.100"/><path d="M1.700 7.300A3.900 3.900 0 0 0 7.300 1.700z" fill="#e4e4e4"/></svg>
<svg class="a" style="left:119.0px;top:481.29999999999995px" width="11" height="8" viewBox="0 0 11 8"><path d="M0 1.500a.700.700 0 0 1 .700-.700h3l1 1.200h5.600a.700.700 0 0 1 .700.700V7.500a.500.500 0 0 1-.500.500H.500a.500.500 0 0 1-.500-.500z" fill="#e4e4e4"/></svg>
<svg class="a" style="left:140.70000000000005px;top:480.79999999999995px" width="9" height="9" viewBox="0 0 9 9"><path d="M1.500 0.500h7v8h-4.500l-2.500-2.500z" fill="none" stroke="#e4e4e4" stroke-width="1.100"/><path d="M1.500 6h2.500v2.500z" fill="#e4e4e4"/><rect x="0" y="0" width="4" height="3.500" fill="#e4e4e4"/></svg>
<svg class="a" style="left:161.89999999999998px;top:480.29999999999995px" width="9" height="10" viewBox="0 0 9 10"><path d="M1 3h7l-.600 6.500a.500.500 0 0 1-.500.500H2.100a.500.500 0 0 1-.500-.500z" fill="#e4e4e4"/><path d="M0 2h9M3 2V0.600h3V2" fill="none" stroke="#e4e4e4" stroke-width="1"/><path d="M3.200 4.200v4.300M4.500 4.200v4.300M5.800 4.200v4.300" stroke="#4a4a4a" stroke-width="0.600"/></svg>
<span class="a" style="left:71px;top:494.5px;width:2px;height:1.5px;background:#e0e0e0;"></span><span class="a" style="left:112.5px;top:494.5px;width:2.0px;height:1.5px;background:#e0e0e0;"></span>
<span class="a" style="left:4.7999999999999545px;top:385px;width:75.400px;height:12.5px;background:#fdfdc9;border:1px solid #b9b98f"></span>
<span class="t" style="left:8.5px;top:387.8px;font-size:8.6px;color:#111;font-weight:500">指示图层可见性</span>
<svg class="a" style="left:1.5px;top:370.5px" width="15" height="16" viewBox="0 0 15 16"><path d="M5.500 15.500c-1.500-2-3.500-4.500-4.500-6 .8-1 2.200-.5 3.200.8L2.700 3c-.3-1.300 1.500-1.800 2-.5l1.300 4-.5-5c-.1-1.400 1.800-1.600 2.100-.2l.9 4.700.3-4c.1-1.300 2-1.200 2 .1l.2 4.600.8-2.700c.4-1.200 2-.8 1.800.5l-1 6c-.3 2-1 3.500-1.800 5z" fill="#fff" stroke="#222" stroke-width="0.900" stroke-linejoin="round"/></svg>
</div>
<div class="a" id="hint" style="left:646px;top:474px;width:115.500px;height:58px;background:#edc829;border-radius:7.500px;box-shadow:0 0 0 0.500px #2a2a40">
<span class="t" style="left:0;width:115.500px;text-align:center;top:5.500px;font-size:19px;font-weight:500;color:#332f3a">反相</span>
<span class="t" style="left:0;width:115.500px;text-align:center;top:33.800px;font-size:16.600px;letter-spacing:0.300px;padding-left:2.500px;color:#332f3a">Ctrl+I</span>
</div>
<div class="a" id="wm" style="left:750px;top:15px;width:240px;height:60px;opacity:0.360;pointer-events:none">
<svg class="a" style="left:0;top:0" width="240" height="60" viewBox="750 15 240 60" fill="none" stroke="#fff" stroke-width="3.400" stroke-linecap="round" stroke-linejoin="round">
<path d="M760.500 27.800h3.500c3 0 4.500 2 4.500 5.500V55c0 6 3 9.500 9 9.500"/>
<rect x="777.300" y="27.800" width="51" height="36.700" rx="6.500"/>
<path d="M784.800 26.500l3.400-5.500 3.400 5.500M814.500 26.500l3.400-5.500 3.400 5.500"/>
<path d="M791.500 33.300h23M791.500 38.300h23M803 28v10"/>
<path d="M778 50.200h5.300M778 55h5.300M822 50.200h5.300M822 55h5.300"/>
<path d="M798.500 45.300l10.800 6.100-10.800 6.100z" fill="#fff" stroke="none"/>
</svg>
<span class="t" id="wmt" style="left:83.500px;top:-4.500px;font-size:48.500px;line-height:60px;color:#fff;font-weight:500;letter-spacing:-2.300px;font-family:'Noto Sans CJK SC',sans-serif">虎课网</span>
</div>
</body></html>
